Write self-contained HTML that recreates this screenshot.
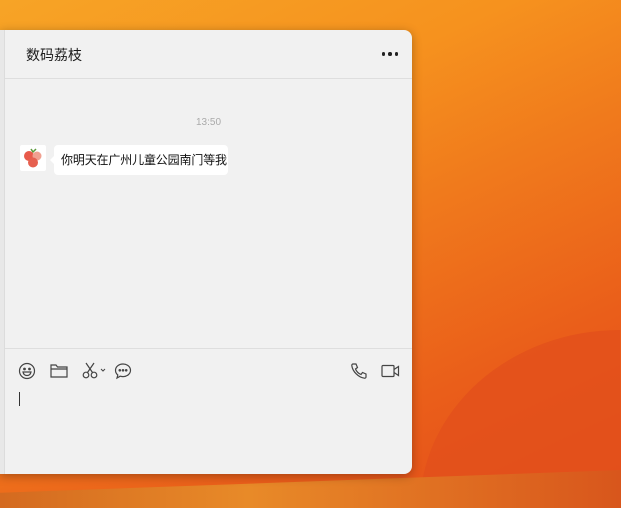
<!DOCTYPE html>
<html><head><meta charset="utf-8"><style>
*{margin:0;padding:0;box-sizing:border-box}
html,body{width:621px;height:508px;overflow:hidden}
body{position:relative;font-family:"Liberation Sans","Noto Sans CJK SC",sans-serif;
background:linear-gradient(155deg,#f7a426 0%,#f6921e 30%,#f07a1c 50%,#ea5e1a 75%,#e24a1a 100%);}
.bg{position:absolute;left:0;top:0;width:621px;height:508px;overflow:hidden}
.wave1{position:absolute;left:420px;top:330px;width:200px;height:178px;border-radius:100% 0 0 0;background:#e2501c;opacity:.8}
.wave2{position:absolute;left:0;top:470px;width:621px;height:38px;background:linear-gradient(90deg,#d46a20,#e88a28 40%,#d8561c);clip-path:polygon(0 60%,100% 0,100% 100%,0 100%)}
.win{position:absolute;left:0;top:30px;width:412px;height:444px;background:#f1f1f1;border-radius:0 8px 8px 0;box-shadow:0 2px 10px rgba(0,0,0,.3);overflow:hidden}
.side{position:absolute;left:0;top:0;width:5px;height:100%;background:#e8e8e8;border-right:1px solid #dcdcdc}
.hdr{position:absolute;left:5px;top:0;right:0;height:49px;border-bottom:1px solid #dedede}
.title{position:absolute;left:21px;top:15px;font-size:14px;color:#1a1a1a}
.dots{position:absolute;right:14px;top:22px;display:flex;gap:3px}
.dots i{width:3.5px;height:3.5px;border-radius:50%;background:#222;display:block}
.time{position:absolute;left:196px;top:87px;font-size:10px;color:#aaa}
.av{position:absolute;left:20px;top:115px;width:26px;height:26px;background:#fff;border-radius:2px}
.bub{position:absolute;left:54px;top:115px;height:30px;width:174px;background:#fff;border-radius:4px;font-size:12px;color:#111;line-height:30px;padding:0 0 0 7px;white-space:nowrap;letter-spacing:-.15px}
.bub:before{content:"";position:absolute;left:-4px;top:11px;border:4px solid transparent;border-right-color:#fff;border-left:0}
.sep{position:absolute;left:5px;right:0;top:318px;border-top:1px solid #dedede}
.cursor{position:absolute;left:19px;top:362px;width:1px;height:14px;background:#333}
svg{position:absolute}
</style></head><body>
<div class="bg"><div class="wave1"></div><div class="wave2"></div></div>
<div class="win">
<div class="side"></div>
<div class="hdr"><div class="title">数码荔枝</div><div class="dots"><i></i><i></i><i></i></div></div>
<div class="time">13:50</div>
<div class="av"><svg width="26" height="26" viewBox="0 0 26 26"><path d="M11 4l2 3 3-3" stroke="#5a9a3a" fill="none" stroke-width="1.5"/><circle cx="9" cy="11" r="5" fill="#e85a4a"/><circle cx="17" cy="11" r="4.5" fill="#f0a090"/><circle cx="13" cy="17.5" r="5" fill="#e66050"/></svg></div>
<div class="bub">你明天在广州儿童公园南门等我</div>
<div class="sep"></div>
<svg style="left:18px;top:332px" width="18" height="18" viewBox="0 0 18 18" fill="none" stroke="#444" stroke-width="1.2"><circle cx="9" cy="9" r="7.5"/><circle cx="6.5" cy="7" r=".8" fill="#444"/><circle cx="11.5" cy="7" r=".8" fill="#444"/><path d="M5 10h8c-.5 2.5-2 3.5-4 3.5S5.5 12.5 5 10z"/></svg>
<svg style="left:50px;top:333px" width="18" height="16" viewBox="0 0 18 16" fill="none" stroke="#444" stroke-width="1.2"><path d="M1 2h5l1.5 2H17v10H1z M1 6h16"/></svg>
<svg style="left:82px;top:332px" width="26" height="18" viewBox="0 0 26 18" fill="none" stroke="#444" stroke-width="1.2"><circle cx="4" cy="13" r="2.8"/><circle cx="12" cy="13" r="2.8"/><path d="M5.5 10.5L12 1M10.5 10.5L4 1"/><path d="M19 7l2 2 2-2" stroke-width="1"/></svg>
<svg style="left:114px;top:332px" width="18" height="18" viewBox="0 0 18 18" fill="none" stroke="#444" stroke-width="1.2"><path d="M9 2c4.2 0 7.5 2.8 7.5 6.3S13.2 14.6 9 14.6c-1 0-2-.2-2.8-.4L3 16l.8-3C2.3 11.8 1.5 10.2 1.5 8.3 1.5 4.8 4.8 2 9 2z"/><circle cx="5.8" cy="8.3" r=".7" fill="#444"/><circle cx="9" cy="8.3" r=".7" fill="#444"/><circle cx="12.2" cy="8.3" r=".7" fill="#444"/></svg>
<svg style="left:350px;top:332px" width="18" height="18" viewBox="0 0 18 18" fill="none" stroke="#444" stroke-width="1.2"><path d="M3 2l3 0 1.5 3.5-2 1.5c1 2.5 3 4.5 5.5 5.5l1.5-2 3.5 1.5v3c0 .8-.7 1.3-1.5 1.2C8.5 15.5 2.5 9.5 1.8 3.5 1.7 2.7 2.2 2 3 2z"/></svg>
<svg style="left:381px;top:334px" width="19" height="14" viewBox="0 0 19 14" fill="none" stroke="#444" stroke-width="1.2"><rect x="1" y="1.5" width="12" height="11" rx="1"/><path d="M13 5.5l4.5-3v9L13 8.5"/></svg>
<div class="cursor"></div>
</div>
</body></html>
